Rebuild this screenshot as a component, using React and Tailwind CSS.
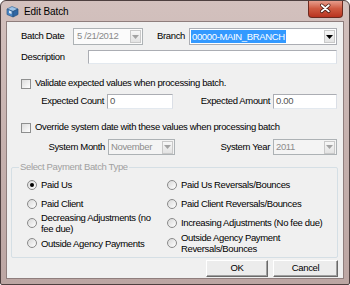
import React from "react";

const FONT = "font-['Liberation_Sans',Arial,sans-serif]";

function Arrow({ color }) {
  return (
    <svg width="7" height="4" viewBox="0 0 7 4">
      <path d="M0 0h7L3.5 4z" fill={color} />
    </svg>
  );
}

function DropBtn({ disabled }) {
  return (
    <div className="w-[11px] h-[13px] border border-[#c9c9c9] bg-gradient-to-b from-[#f7f7f7] to-[#e3e3e3] flex items-center justify-center">
      <Arrow color={disabled ? "#a3a3a3" : "#000"} />
    </div>
  );
}

function Check() {
  return <div className="w-[10px] h-[10px] border border-[#8e8f8f] bg-gradient-to-br from-[#dcdcdc] to-white shrink-0" />;
}

function Radio({ checked }) {
  return (
    <div className="w-[10px] h-[10px] rounded-full border border-[#8a8a8a] bg-gradient-to-br from-[#d8d8d8] to-white flex items-center justify-center shrink-0">
      {checked && <div className="w-[4px] h-[4px] rounded-full bg-black" />}
    </div>
  );
}

function RadioItem({ checked, children }) {
  return (
    <div className="flex items-center gap-[4px] leading-[11px] whitespace-nowrap">
      <Radio checked={checked} />
      <span>{children}</span>
    </div>
  );
}

function TextBox({ w, value }) {
  return (
    <div className={`${w} h-full bg-white border border-[#abadb3] border-r-[#dbdfe6] border-b-[#e3e9ef] flex items-center pl-[2px] text-[#555]`}>
      {value}
    </div>
  );
}

function DisCombo({ w, value }) {
  return (
    <div className={`${w} h-full bg-[#f4f4f4] border border-[#adb2b5] flex items-center justify-between pl-[2px] pr-[1px] text-[#8d8d8d]`}>
      <span>{value}</span>
      <DropBtn disabled />
    </div>
  );
}

export default function App() {
  return (
    <div className={`${FONT} w-[350px] h-[285px] border border-[#4e4040] rounded-t-[6px] rounded-b-[2px] bg-gradient-to-b from-[#d3c1be] via-[#c6b1ae] to-[#bca6a3] px-[5px] flex flex-col text-[9.5px] tracking-[-0.35px] text-black overflow-hidden whitespace-nowrap`}>
      {/* Title bar */}
      <div className="h-[20px] flex items-center shrink-0">
        <svg width="13" height="13" viewBox="0 0 13 13" className="mt-[1px]">
          <path d="M1 4 L6 1.5 L12 4 L7 6.5 Z" fill="#9fc3e6" stroke="#3a6b9c" strokeWidth="0.7" />
          <path d="M1 4 L7 6.5 L7 12 L1 9.5 Z" fill="#4a86c5" stroke="#2d5a88" strokeWidth="0.7" />
          <path d="M7 6.5 L12 4 L12 9.5 L7 12 Z" fill="#2f66a3" stroke="#24507f" strokeWidth="0.7" />
          <path d="M3 5.5 L5.5 6.5 L5.5 9 L3 8 Z" fill="#dfe9f3" />
        </svg>
        <span className="ml-[5px] text-[10px] tracking-[-0.1px] text-black mt-[1px]">Edit Batch</span>
        <div className="ml-auto self-start -mt-[1px] mr-[1px] w-[35px] h-[18px] rounded-b-[4px] border border-[#6c2a20] border-t-0 bg-gradient-to-b from-[#e9a596] via-[#cf5a42] to-[#b8321f] flex items-center justify-center">
          <svg width="35" height="18" viewBox="0 0 35 18">
            <path d="M13.5 5 L21 11.5 M21 5 L13.5 11.5" stroke="#4b1a12" strokeWidth="3.6" strokeLinecap="round" />
            <path d="M13.5 5 L21 11.5 M21 5 L13.5 11.5" stroke="#ffffff" strokeWidth="2" strokeLinecap="round" />
          </svg>
        </div>
      </div>

      {/* Content panel */}
      <div className="w-[338px] h-[258px] border border-[#8f7e7d] bg-[#f0f0f0] flex flex-col shrink-0 pt-[6px]">
        {/* Row 1 */}
        <div className="flex items-center h-[17px]">
          <span className="ml-[14px] w-[52px]">Batch Date</span>
          <div className="w-[70px] h-full bg-[#fbfbfb] border border-[#adb2b5] flex items-center justify-between pl-[3px] pr-[1px] text-[#8a8a8a]">
            <span>5 /21/2012</span>
            <DropBtn disabled />
          </div>
          <span className="ml-[14px] w-[32px]">Branch</span>
          <div className="w-[148px] h-full bg-white border border-[#abadb3] flex items-center justify-between pl-[1px] pr-[1px]">
            <span className="bg-[#3399ff] text-white px-[1px] leading-[13px] h-[13px]">00000-MAIN_BRANCH</span>
            <DropBtn />
          </div>
        </div>

        {/* Row 2 */}
        <div className="flex items-center h-[14px] mt-[5px]">
          <span className="ml-[14px] w-[67px]">Description</span>
          <TextBox w="w-[249px]" value="" />
        </div>

        {/* Checkbox 1 */}
        <div className="flex items-center h-[11px] mt-[14px] ml-[14px] gap-[4px]">
          <Check />
          <span>Validate expected values when processing batch.</span>
        </div>

        {/* Expected row */}
        <div className="flex items-center h-[15px] mt-[5px]">
          <span className="w-[100px] text-right pr-[3px]">Expected Count</span>
          <TextBox w="w-[66px]" value="0" />
          <span className="w-[100px] text-right pr-[3px]">Expected Amount</span>
          <TextBox w="w-[64px]" value="0.00" />
        </div>

        {/* Checkbox 2 */}
        <div className="flex items-center h-[11px] mt-[13px] ml-[14px] gap-[4px]">
          <Check />
          <span>Override system date with these values when processing batch</span>
        </div>

        {/* System row */}
        <div className="flex items-center h-[16px] mt-[6px]">
          <span className="w-[101px] text-right pr-[3px]">System Month</span>
          <DisCombo w="w-[67px]" value="November" />
          <span className="w-[98px] text-right pr-[3px]">System Year</span>
          <DisCombo w="w-[64px]" value="2011" />
        </div>

        {/* Group box */}
        <div className="relative mt-[12px] ml-[4px] w-[327px] h-[91px] border border-[#d5dfe5] rounded-[2px]">
          <span className="absolute left-[7px] -top-[7px] bg-[#f0f0f0] px-[1px] text-[#a0a0a0] leading-[12px]">Select Payment Batch Type</span>
          <div className="grid grid-cols-[140px_1fr] grid-rows-[19px_19px_19px_22px] pl-[15px] pt-[7px] items-center">
            <RadioItem checked>Paid Us</RadioItem>
            <RadioItem>Paid Us Reversals/Bounces</RadioItem>
            <RadioItem>Paid Client</RadioItem>
            <RadioItem>Paid Client Reversals/Bounces</RadioItem>
            <RadioItem>Decreasing Adjustments (no<br />fee due)</RadioItem>
            <RadioItem>Increasing Adjustments (No fee due)</RadioItem>
            <RadioItem>Outside Agency Payments</RadioItem>
            <RadioItem>Outside Agency Payment<br />Reversals/Bounces</RadioItem>
          </div>
        </div>

        {/* Buttons */}
        <div className="flex justify-end gap-[5px] pr-[5px] mt-[2px] h-[17px]">
          <button className="w-[62px] h-full bg-[#ececec] border border-t-white border-l-white border-r-[#696969] border-b-[#696969] shadow-[inset_-1px_-1px_0_#a0a0a0] flex items-center justify-center">OK</button>
          <button className="w-[65px] h-full bg-[#ececec] border border-t-white border-l-white border-r-[#696969] border-b-[#696969] shadow-[inset_-1px_-1px_0_#a0a0a0] flex items-center justify-center">Cancel</button>
        </div>
      </div>
    </div>
  );
}
